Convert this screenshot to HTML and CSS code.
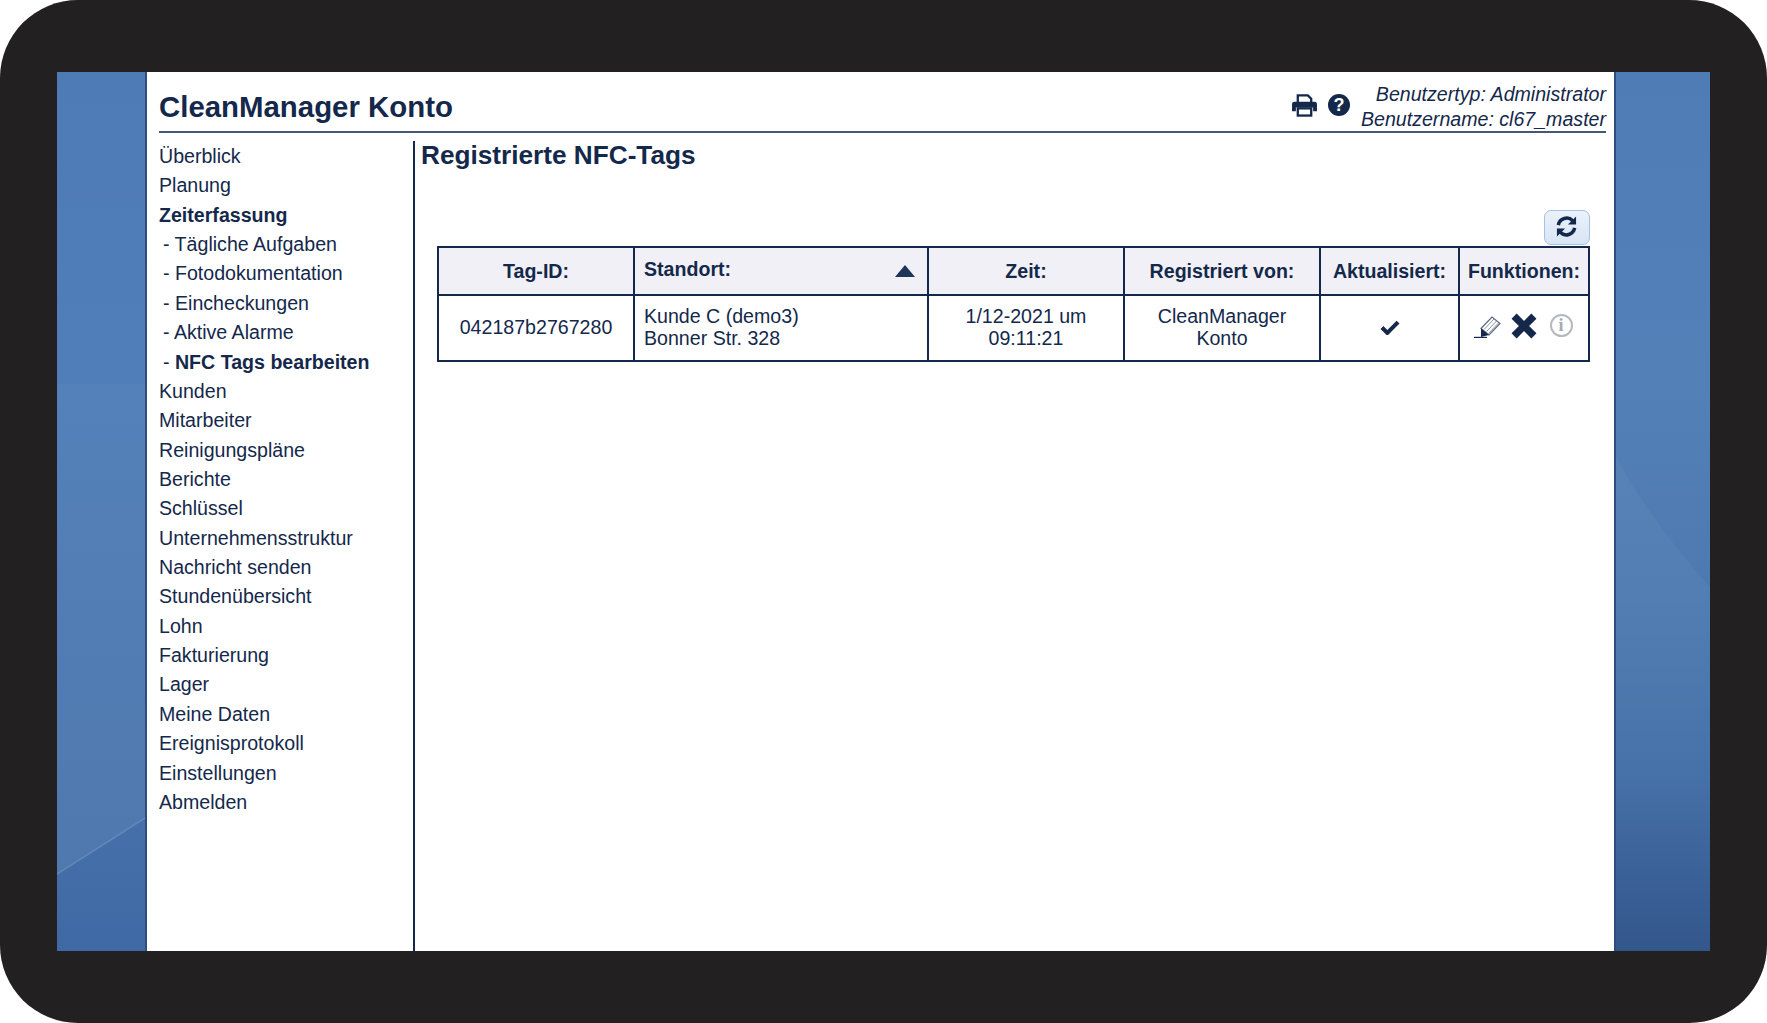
FILE: index.html
```html
<!DOCTYPE html>
<html lang="de">
<head>
<meta charset="utf-8">
<title>CleanManager Konto</title>
<link rel="stylesheet" href="styles.css">
</head>
<body>
<div class="frame">
  <div class="screen">
    <div class="strip strip-left">
      <svg class="wall" viewBox="0 0 90 879" preserveAspectRatio="none">
        <defs>
          <linearGradient id="la" x1="0" y1="0" x2="0" y2="1"><stop offset="0" stop-color="#4e7bb5"/><stop offset="1" stop-color="#4f7eb8"/></linearGradient>
          <linearGradient id="lb" x1="0" y1="0" x2="0" y2="1"><stop offset="0" stop-color="#5481b9"/><stop offset="1" stop-color="#4f78ae"/></linearGradient>
          <linearGradient id="lc" x1="0" y1="0" x2="0" y2="1"><stop offset="0" stop-color="#4670a9"/><stop offset="1" stop-color="#3f69a4"/></linearGradient>
        </defs>
        <rect width="90" height="314" fill="url(#la)"/>
        <rect y="312" width="90" height="500" fill="url(#lb)"/>
        <polygon points="0,802 90,746 90,879 0,879" fill="url(#lc)"/>
        <polyline points="0,802 90,746" stroke="#5f87ba" stroke-width="1.5" fill="none"/>
      </svg>
    </div>
    <div class="panel">
      <header class="top">
        <h1 class="title">CleanManager Konto</h1>
        <div class="top-tools">
          <svg class="ico-print" viewBox="0 0 26 24">
            <path d="M6 9V1.500h10.500l3.500 3.500V9" fill="none" stroke="#14284b" stroke-width="2.400"/>
            <path d="M2.500 8h21A2.500 2.500 0 0 1 26 10.500V18h-4v-4H4v4H0v-7.500A2.500 2.500 0 0 1 2.500 8z" fill="#14284b"/>
            <rect x="6" y="15" width="14" height="7.500" fill="none" stroke="#14284b" stroke-width="2.400"/>
          </svg>
          <span class="ico-help">?</span>
          <div class="user">
            <div>Benutzertyp: Administrator</div>
            <div>Benutzername: cl67_master</div>
          </div>
        </div>
      </header>
      <div class="body">
        <nav class="nav">
          <a>Überblick</a>
          <a>Planung</a>
          <a class="bold">Zeiterfassung</a>
          <a class="sub">- Tägliche Aufgaben</a>
          <a class="sub">- Fotodokumentation</a>
          <a class="sub">- Eincheckungen</a>
          <a class="sub">- Aktive Alarme</a>
          <a class="sub">- <b>NFC Tags bearbeiten</b></a>
          <a>Kunden</a>
          <a>Mitarbeiter</a>
          <a>Reinigungspläne</a>
          <a>Berichte</a>
          <a>Schlüssel</a>
          <a>Unternehmensstruktur</a>
          <a>Nachricht senden</a>
          <a>Stundenübersicht</a>
          <a>Lohn</a>
          <a>Fakturierung</a>
          <a>Lager</a>
          <a>Meine Daten</a>
          <a>Ereignisprotokoll</a>
          <a>Einstellungen</a>
          <a>Abmelden</a>
        </nav>
        <main class="main">
          <h2 class="heading">Registrierte NFC-Tags</h2>
          <div class="toolbar">
            <button class="refresh" type="button" aria-label="Aktualisieren">
              <svg viewBox="0 0 24 24" class="ico-refresh">
                <path d="M3.500 10.500A8.800 8.800 0 0 1 18.500 6" fill="none" stroke="#14284b" stroke-width="3.600"/>
                <path d="M22 1.500V10h-8.500z" fill="#14284b"/>
                <path d="M20.500 13.500A8.800 8.800 0 0 1 5.500 18" fill="none" stroke="#14284b" stroke-width="3.600"/>
                <path d="M2 22.500V14h8.500z" fill="#14284b"/>
              </svg>
            </button>
          </div>
          <table class="grid">
            <colgroup>
              <col class="c1"><col class="c2"><col class="c3"><col class="c4"><col class="c5"><col class="c6">
            </colgroup>
            <thead>
              <tr>
                <th>Tag-ID:</th>
                <th class="sorted"><span class="sort-label">Standort:</span><span class="arrow"></span></th>
                <th>Zeit:</th>
                <th>Registriert von:</th>
                <th>Aktualisiert:</th>
                <th>Funktionen:</th>
              </tr>
            </thead>
            <tbody>
              <tr>
                <td>042187b2767280</td>
                <td class="left">Kunde C (demo3)<br>Bonner Str. 328</td>
                <td>1/12-2021 um<br>09:11:21</td>
                <td>CleanManager<br>Konto</td>
                <td>
                  <svg class="ico-check" viewBox="0 0 18 14"><path d="M1.500 7l5 5L16.500 2" fill="none" stroke="#14284b" stroke-width="3.800"/></svg>
                </td>
                <td>
                  <div class="fn">
                    <svg class="ico-edit" viewBox="0 0 27 24">
                      <path d="M7 14.500L18 3l8 6.500L15 21z" fill="#fff" stroke="#5b6980" stroke-width="1.200"/>
                      <path d="M10 15.500L20 5M12.500 17.500L22.500 7M14.500 19.500L24.500 9" stroke="#8a96a8" stroke-width="1"/>
                      <path d="M7 14.500L15 21 7 23z" fill="#14284b"/>
                      <path d="M0 23.500h13" stroke="#14284b" stroke-width="1.400"/>
                    </svg>
                    <svg class="ico-x" viewBox="0 0 24 24"><path d="M3.500 3.500l17 17M20.500 3.500l-17 17" stroke="#14284b" stroke-width="6.200"/></svg>
                    <span class="ico-info">i</span>
                  </div>
                </td>
              </tr>
            </tbody>
          </table>
        </main>
      </div>
    </div>
    <div class="strip strip-right">
      <svg class="wall" viewBox="0 0 96 879" preserveAspectRatio="none">
        <defs>
          <linearGradient id="ra" x1="0" y1="0" x2="0" y2="1">
            <stop offset="0" stop-color="#4f7cb5"/>
            <stop offset=".35" stop-color="#5480b8"/>
            <stop offset=".6" stop-color="#4d79b0"/>
            <stop offset=".8" stop-color="#446ea6"/>
            <stop offset="1" stop-color="#33578d"/>
          </linearGradient>
          <linearGradient id="rb" x1="0" y1="0" x2="0" y2="1">
            <stop offset="0" stop-color="#6a94c6" stop-opacity=".22"/>
            <stop offset=".55" stop-color="#6a94c6" stop-opacity=".12"/>
            <stop offset="1" stop-color="#6a94c6" stop-opacity="0"/>
          </linearGradient>
        </defs>
        <rect width="96" height="879" fill="url(#ra)"/>
        <path d="M0 385C30 440 65 480 96 515V800H0z" fill="url(#rb)"/>
      </svg>
    </div>
  </div>
</div>
</body>
</html>
```

FILE: styles.css
```css
* { box-sizing: border-box; }
html, body { margin: 0; padding: 0; height: 100%; background: #fff; }
body { width: 1767px; height: 1023px; overflow: hidden; }

.frame {
  width: 1767px;
  height: 1023px;
  padding: 72px 57px;
  background: #222021;
  border-radius: 78px;
}
.screen { display: flex; height: 879px; }

.strip { flex: none; height: 100%; }
.strip-left { width: 88px; }
.strip-right { width: 94px; }
.wall { display: block; width: 100%; height: 100%; }

.panel {
  flex: 1;
  display: flex;
  flex-direction: column;
  min-width: 0;
  background: #fff;
  border-left: 2px solid #2e4d7c;
  border-right: 2px solid #2e4d7c;
  color: #14284b;
  font-family: "Liberation Sans", Arial, sans-serif;
  font-size: 19.600px;
  padding-left: 12px;
}

.top {
  flex: none;
  height: 61px;
  margin-right: 8px;
  display: flex;
  justify-content: space-between;
  align-items: flex-end;
  border-bottom: 2px solid #46587a;
}
.title { margin: 0 0 6px; font-size: 29.400px; line-height: 36px; font-weight: 700; }
.top-tools { display: flex; align-items: center; }
.ico-print { width: 25px; height: 23px; margin-right: 11px; margin-bottom: 3px; }
.ico-help {
  width: 22px;
  height: 22px;
  margin-right: 11px;
  margin-bottom: 3px;
  border-radius: 50%;
  background: #14284b;
  color: #fff;
  font-size: 18px;
  font-weight: 700;
  line-height: 22px;
  text-align: center;
}
.user { text-align: right; font-style: italic; line-height: 25px; margin-bottom: -1px; }

.body { flex: 1; display: flex; min-height: 0; }
.nav {
  flex: none;
  width: 256px;
  margin-top: 8px;
  padding-top: 1px;
  border-right: 2px solid #14284b;
}
.nav a { display: block; line-height: 29.360px; white-space: nowrap; }
.nav .bold { font-weight: 700; }
.nav .sub { padding-left: 4px; }

.main { flex: 1; min-width: 0; padding: 0 24px 0 6px; }
.heading { margin: 6px 0 0; font-size: 26.200px; line-height: 32px; font-weight: 700; }
.toolbar { display: flex; justify-content: flex-end; margin-top: 39px; }
.refresh {
  width: 46px;
  height: 35px;
  padding: 0 2px 2px 0;
  display: flex;
  align-items: center;
  justify-content: center;
  border: 1.500px solid #a6c0e6;
  border-radius: 7px;
  background: linear-gradient(#eaf1fa, #d8e5f4);
}
.ico-refresh { width: 23px; height: 23px; }

.grid {
  width: 1151px;
  margin-left: 16px;
  margin-top: 1px;
  table-layout: fixed;
  border-collapse: collapse;
  border: 2px solid #14284b;
}
.c1 { width: 196px; }
.c2 { width: 294px; }
.c3 { width: 196px; }
.c4 { width: 196px; }
.c5 { width: 139px; }
.c6 { width: 130px; }
.grid th, .grid td { border: 2px solid #14284b; text-align: center; padding: 0; }
.grid th { height: 48px; background: #f0f0f6; font-size: 19.600px; font-weight: 700; }
.grid td { height: 66px; line-height: 22.500px; font-size: 19.600px; padding-bottom: 2px; }
.grid td.left { text-align: left; padding-left: 9px; }
.grid th.sorted { text-align: left; padding: 0 12px 4px 9px; }
.sorted { position: relative; }
.sort-label { display: inline-block; }
.arrow {
  position: absolute;
  right: 12px;
  bottom: 17px;
  width: 0;
  height: 0;
  border-left: 10.500px solid transparent;
  border-right: 10.500px solid transparent;
  border-bottom: 12px solid #1d3557;
}
.ico-check { width: 20px; height: 15px; display: block; margin: 0 auto; }
.fn { display: flex; align-items: center; justify-content: center; gap: 9px; padding-bottom: 3px; padding-right: 2px; }
.ico-edit { width: 27px; height: 24px; }
.ico-x { width: 28px; height: 28px; }
.ico-info {
  width: 23px;
  height: 23px;
  margin-left: 3px;
  border: 2px solid #b5b9bf;
  border-radius: 50%;
  color: #a5a9b0;
  font-family: "Liberation Serif", serif;
  font-size: 18px;
  font-weight: 700;
  line-height: 19px;
  text-align: center;
}
```
